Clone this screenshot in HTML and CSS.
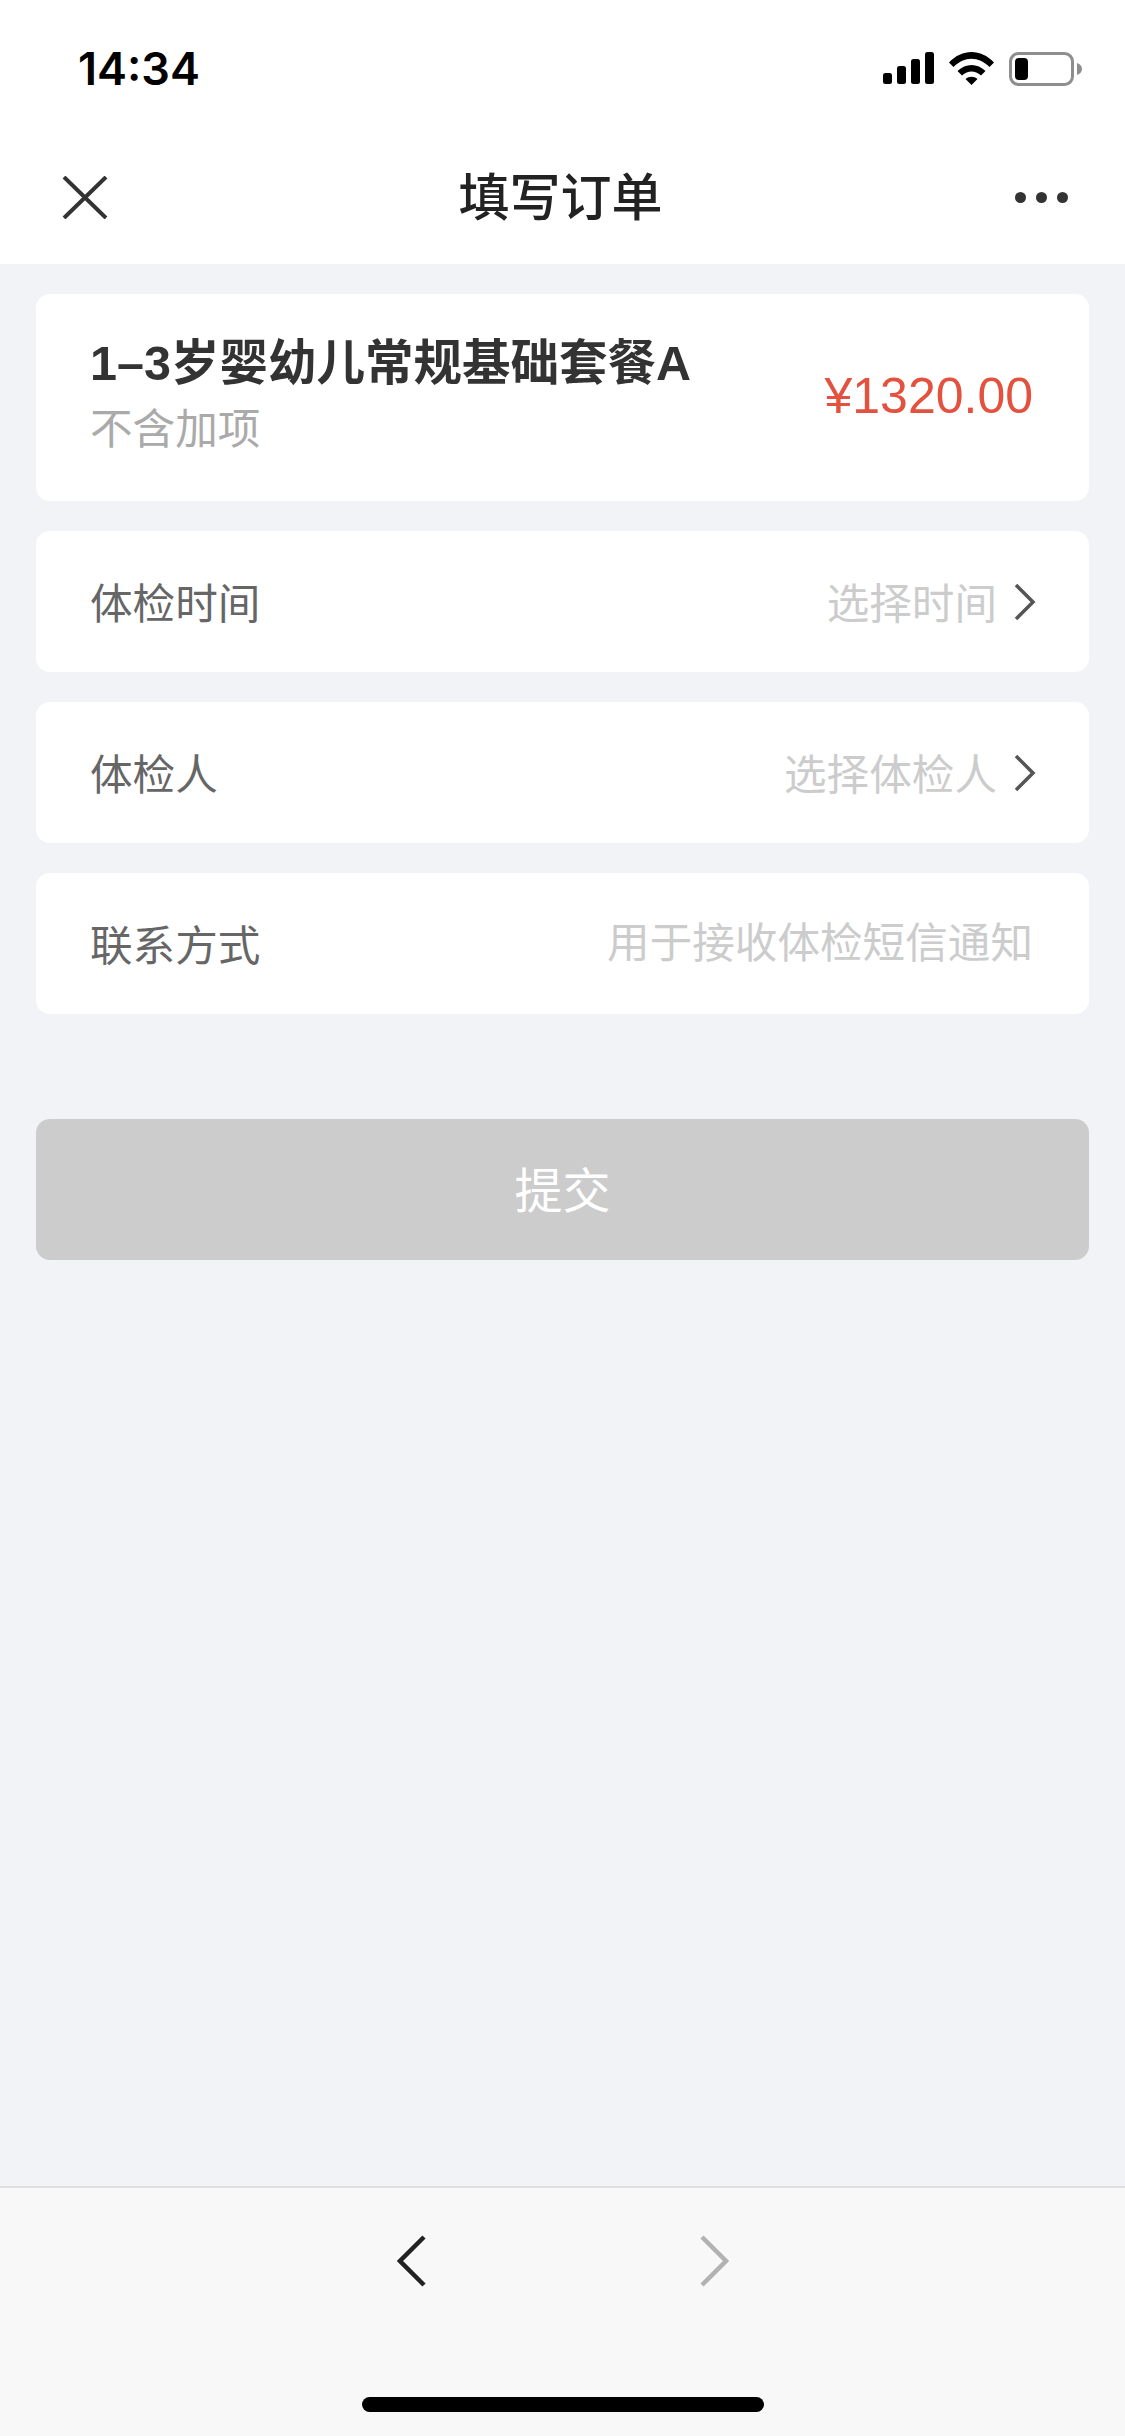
FILE: index.html
```html
<!DOCTYPE html>
<html lang="zh-CN">
<head>
    <meta charset="UTF-8">
    <meta name="viewport" content="width=device-width, initial-scale=1.0">
    <title>填写订单</title>
    <link rel="stylesheet" href="styles.css">
</head>
<body>
    <div class="page">
        <header class="top">
            <div class="status-bar">
                <span class="time">14:34</span>
                <div class="status-icons">
                    <svg width="51" height="32" viewBox="0 0 51 32">
                        <rect x="0" y="21" width="9" height="11" rx="2.5"/>
                        <rect x="14" y="14" width="9" height="18" rx="2.5"/>
                        <rect x="28" y="7" width="9" height="25" rx="2.5"/>
                        <rect x="42" y="0" width="9" height="32" rx="2.5"/>
                    </svg>
                    <svg width="45" height="33" viewBox="0 0 45 33">
                        <path d="M0 10.500 C13 -3.500 32 -3.500 45 10.500 L40.500 15 C29.500 4 15.500 4 4.500 15 Z"/>
                        <path d="M8.500 19 C16.500 11 28.500 11 36.500 19 L32 23.500 C26 18 19 18 13 23.500 Z"/>
                        <path d="M16.500 27 C20 24 25 24 28.500 27 L22.500 33 Z"/>
                    </svg>
                    <svg class="battery" width="73" height="34" viewBox="0 0 73 34">
                        <rect x="1.500" y="1.500" width="62" height="31" rx="8" fill="#fff" stroke="#8e8e8e" stroke-width="3"/>
                        <rect x="6" y="6" width="13" height="22" rx="4"/>
                        <path d="M68 11 C71 12 73 14 73 17 C73 20 71 22 68 23 Z" fill="#8e8e8e"/>
                    </svg>
                </div>
            </div>
            <nav class="nav-bar">
                <svg width="46" height="43" viewBox="0 0 46 43" fill="none" stroke="#333" stroke-width="4">
                    <path d="M2 1 L44 42 M44 1 L2 42"/>
                </svg>
                <h1>填写订单</h1>
                <div class="more">
                    <span class="dot"></span>
                    <span class="dot"></span>
                    <span class="dot"></span>
                </div>
            </nav>
        </header>

        <main class="content">
            <section class="card package">
                <div>
                    <div class="package-name">1–3岁婴幼儿常规基础套餐A</div>
                    <div class="package-note">不含加项</div>
                </div>
                <span class="price">¥1320.00</span>
            </section>

            <section class="card row">
                <span class="row-label">体检时间</span>
                <div class="row-value">
                    <span class="placeholder">选择时间</span>
                    <svg class="chevron" width="22" height="38" viewBox="0 0 22 38" fill="none" stroke="#555" stroke-width="3.500">
                        <path d="M2 2 L19 19 L2 36"/>
                    </svg>
                </div>
            </section>

            <section class="card row">
                <span class="row-label">体检人</span>
                <div class="row-value">
                    <span class="placeholder">选择体检人</span>
                    <svg class="chevron" width="22" height="38" viewBox="0 0 22 38" fill="none" stroke="#555" stroke-width="3.500">
                        <path d="M2 2 L19 19 L2 36"/>
                    </svg>
                </div>
            </section>

            <section class="card row">
                <span class="row-label">联系方式</span>
                <span class="placeholder contact">用于接收体检短信通知</span>
            </section>

            <button class="submit" type="button">提交</button>
        </main>

        <footer class="toolbar">
            <div class="toolbar-arrows">
                <svg width="30" height="52" viewBox="0 0 30 52" fill="none" stroke="#222" stroke-width="4.500">
                    <path d="M27 2 L3 26 L27 50"/>
                </svg>
                <svg width="30" height="52" viewBox="0 0 30 52" fill="none" stroke="#b2b2b2" stroke-width="4.500">
                    <path d="M3 2 L27 26 L3 50"/>
                </svg>
            </div>
            <div class="home-bar"></div>
        </footer>
    </div>
</body>
</html>
```

FILE: styles.css
```css
/* Base styles */
body {
    margin: 0;
    background-color: #f2f3f7;
    font-family: "Liberation Sans", "Noto Sans CJK SC", sans-serif;
}

.page {
    width: 1125px;
    height: 2436px;
    display: flex;
    flex-direction: column;
    overflow: hidden;
}

/* Status bar and title */
.top {
    height: 264px;
    background: #fff;
    flex-shrink: 0;
}

.status-bar {
    height: 133px;
    padding: 0 43px 0 78px;
    display: flex;
    align-items: flex-start;
    justify-content: space-between;
    box-sizing: border-box;
}

.time {
    margin-top: 43px;
    font-family: "Inter", "Liberation Sans", sans-serif;
    font-size: 45px;
    line-height: 52px;
    font-weight: 600;
    color: #000;
}

.status-icons {
    margin-top: 52px;
    display: flex;
    align-items: flex-start;
    gap: 15px;
}

.nav-bar {
    height: 128px;
    padding: 0 57px 0 62px;
    display: flex;
    align-items: center;
    justify-content: space-between;
    position: relative;
}

.nav-bar h1 {
    position: absolute;
    left: 0;
    right: 0;
    margin: 0;
    padding: 0 4px 6px 0;
    text-align: center;
    font-family: "Noto Sans CJK SC", sans-serif;
    font-size: 51px;
    font-weight: 500;
    color: #222;
}

.more {
    display: flex;
    gap: 10px;
}

.dot {
    width: 11px;
    height: 11px;
    border-radius: 50%;
    background: #333;
}

/* Cards */
.content {
    flex: 1;
    padding: 30px 36px 0;
    display: flex;
    flex-direction: column;
    gap: 30px;
}

.card {
    background: #fff;
    border-radius: 14px;
    padding: 0 56px 0 54px;
    display: flex;
    align-items: center;
    justify-content: space-between;
}

.package {
    height: 207px;
    padding-bottom: 3px;
    box-sizing: border-box;
}

.package-name {
    font-size: 48.500px;
    line-height: 62px;
    font-weight: 700;
    color: #333;
}

.package-note {
    font-size: 42.600px;
    line-height: 62px;
    color: #aaa;
    margin-top: 4px;
}

.price {
    font-size: 50px;
    color: #e2523f;
}

.row {
    height: 141px;
}

.row-label {
    padding-bottom: 2px;
    font-size: 42.600px;
    color: #666;
}

.row-value {
    display: flex;
    align-items: center;
    gap: 17px;
    margin-right: -3px;
}

.placeholder {
    padding-bottom: 2px;
    font-size: 42.600px;
    color: #ccc;
}

.contact {
    position: relative;
    top: -3px;
}

.submit {
    height: 141px;
    margin-top: 75px;
    padding-bottom: 6px;
    border: 0;
    border-radius: 14px;
    background: #cccccc;
    color: #fff;
    font-family: "Noto Sans CJK SC", sans-serif;
    font-size: 48px;
}

/* Bottom toolbar */
.toolbar {
    height: 250px;
    flex-shrink: 0;
    background: #f8f8f8;
    border-top: 2px solid #dfdfdf;
    box-sizing: border-box;
    display: flex;
    flex-direction: column;
    align-items: center;
}

.toolbar-arrows {
    margin-top: 47px;
    display: flex;
    gap: 272px;
}

.home-bar {
    width: 402px;
    height: 15px;
    margin-top: 110px;
    border-radius: 8px;
    background: #000;
}
```
